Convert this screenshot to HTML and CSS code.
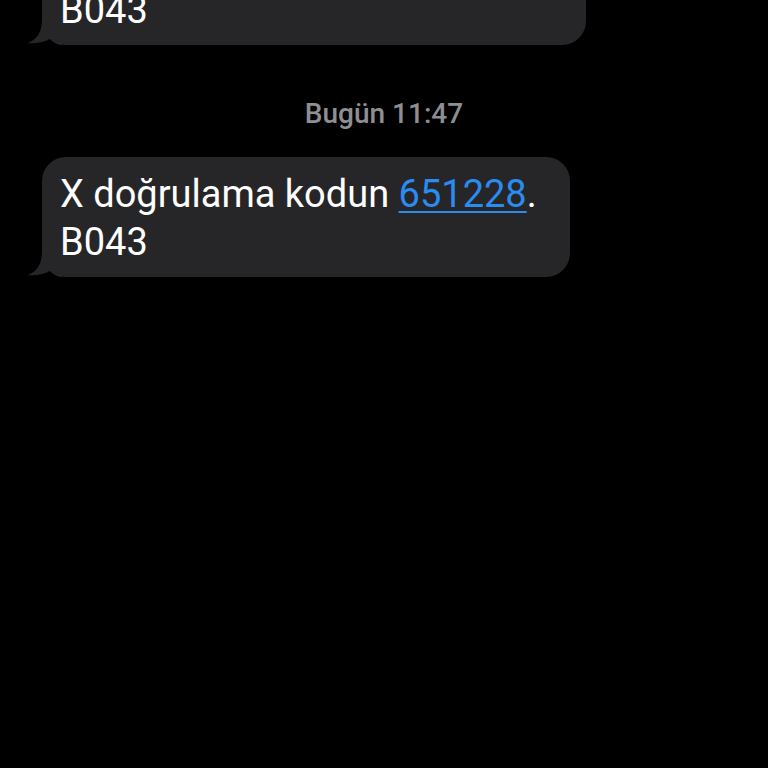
FILE: index.html
```html
<!DOCTYPE html>
<html lang="tr">
<head>
<meta charset="utf-8">
<link rel="stylesheet" href="styles.css">
</head>
<body>
<main class="thread">
  <div class="bubble bubble-prev">
    <span class="line">X doğrulama kodun 482913.</span>
    <span class="line">B043</span>
    <svg class="tail" width="34" height="26" viewBox="0 0 34 26"><path d="M14 0 C14 12 10 20 0 24 C8 25 16 23 22 20 C26 24 30 26 34 26 L34 0 Z" fill="#262628"/></svg>
  </div>
  <div class="stamp">Bugün 11:47</div>
  <div class="bubble">
    <span class="line">X doğrulama kodun <a class="code">651228</a>.</span>
    <span class="line">B043</span>
    <svg class="tail" width="34" height="26" viewBox="0 0 34 26"><path d="M14 0 C14 12 10 20 0 24 C8 25 16 23 22 20 C26 24 30 26 34 26 L34 0 Z" fill="#262628"/></svg>
  </div>
</main>
</body>
</html>
```
FILE: styles.css
```css
html, body {
  margin: 0;
  padding: 0;
  background: #000;
  height: 100%;
  overflow: hidden;
}
.thread {
  display: flex;
  flex-direction: column;
  align-items: flex-start;
  padding-left: 42px;
  font-family: Roboto, "Liberation Sans", sans-serif;
}
.bubble {
  position: relative;
  background: #262628;
  color: #fff;
  border-radius: 24px;
  padding: 13px 33px 11px 18px;
  font-size: 38px;
  line-height: 48px;
  display: flex;
  flex-direction: column;
}
.bubble-prev {
  margin-top: -75px;
  padding-right: 49px;
}
.line {
  white-space: nowrap;
}
.code {
  color: #2a8cf0;
  text-decoration: underline;
  text-underline-offset: 4px;
  text-decoration-thickness: 2px;
}
.tail {
  position: absolute;
  left: -14px;
  bottom: 0;
}
.stamp {
  align-self: center;
  margin-left: -42px;
  margin-top: 54px;
  margin-bottom: 28px;
  color: #8e8e93;
  font-size: 28px;
  font-weight: 500;
  line-height: 30px;
}
```
